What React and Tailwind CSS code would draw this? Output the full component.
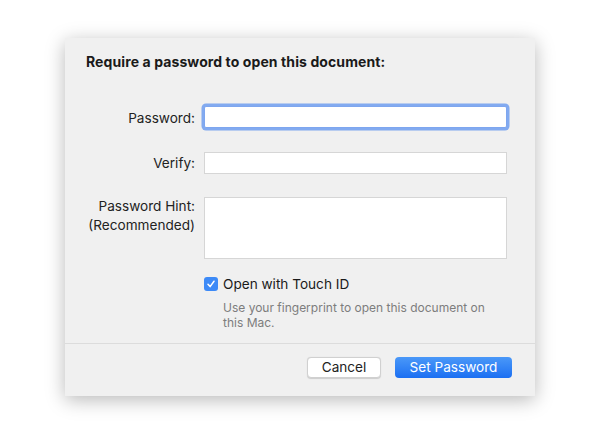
import React from "react";

export default function App() {
  const font = { fontFamily: "Inter, 'Noto Sans', sans-serif" };
  return (
    <div className="w-[600px] h-[434px] bg-white pt-[38px] pl-[65px]" style={font}>
      <div className="w-[470px] h-[358px] bg-[#f0f0f0] shadow-[0_4px_18px_rgba(0,0,0,0.28)] flex flex-col text-[#222]">
        <div className="pl-[21px] pt-[15px] text-[14px] leading-[18px] font-bold text-[#1a1a1a] tracking-[0.1px]">
          Require a password to open this document:
        </div>
        <div className="mt-[35px] flex flex-col">
          <div className="flex items-center h-[22px]">
            <div className="w-[130px] text-right text-[13.6px] pt-[2px]">Password:</div>
            <div className="ml-[9px] w-[303px] h-[22px] bg-white border border-[#7ea6ef] rounded-[2px] shadow-[0_0_0_2.5px_rgba(110,158,240,0.85)]"></div>
          </div>
          <div className="flex items-center h-[22px] mt-[24px]">
            <div className="w-[130px] text-right text-[13.6px]">Verify:</div>
            <div className="ml-[9px] w-[303px] h-[22px] bg-white border border-[#d6d6d6]"></div>
          </div>
          <div className="flex items-start mt-[23px]">
            <div className="w-[130px] text-right text-[13.6px] leading-[19px] pt-0">
              Password Hint:
              <br />
              (Recommended)
            </div>
            <div className="ml-[9px] w-[303px] h-[62px] bg-white border border-[#d6d6d6]"></div>
          </div>
          <div className="flex mt-[18px] ml-[139px]">
            <div className="w-[14px] h-[14px] rounded-[3px] bg-[#3d8af7] flex items-center justify-center mt-[0px]">
              <svg width="10" height="10" viewBox="0 0 10 10">
                <path d="M2 5.2 L4.1 7.6 L8 2.2" fill="none" stroke="white" strokeWidth="1.5" strokeLinecap="round" strokeLinejoin="round" />
              </svg>
            </div>
            <div className="ml-[5px] flex flex-col">
              <div className="text-[13.6px] leading-[14px] text-[#1a1a1a]">Open with Touch ID</div>
              <div className="mt-[9px] text-[12px] leading-[15px] text-[#7d7d7d] w-[270px]">
                Use your fingerprint to open this document on this Mac.
              </div>
            </div>
          </div>
        </div>
        <div className="mt-auto border-t border-[#dcdcdc] h-[53px] flex justify-end items-start pt-[13px] pr-[23px] gap-[14px]">
          <button className="w-[74px] h-[21px] bg-white border border-[#d0d0d0] rounded-[4px] text-[13.6px] leading-[19px] text-[#222] shadow-[0_0.5px_1px_rgba(0,0,0,0.15)]">
            Cancel
          </button>
          <button className="w-[117px] h-[21px] rounded-[4px] text-[13.6px] leading-[21px] text-white bg-gradient-to-b from-[#4a98f8] to-[#1b6ff2]">
            Set Password
          </button>
        </div>
      </div>
    </div>
  );
}
